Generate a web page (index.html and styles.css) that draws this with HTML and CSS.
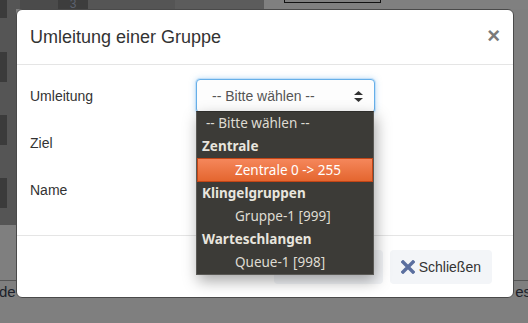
FILE: index.html
```html
<!DOCTYPE html>
<html lang="de">
<head>
  <meta charset="UTF-8">
  <title>Umleitung einer Gruppe</title>
  <link rel="stylesheet" href="styles.css">
</head>
<body>
  <div class="page">
    <div class="oben">
      <div class="seite">
        <div class="klotz k1"></div>
        <div class="klotz"></div>
        <div class="klotz"></div>
        <div class="klotz"></div>
      </div>
      <div class="rest">
        <div class="zelle z1"></div>
        <div class="zelle z2"></div>
        <div class="zelle z3">3</div>
        <div class="zelle z4"></div>
        <div class="zelle z5"></div>
        <div class="zelle z6"><span class="kasten"></span></div>
      </div>
    </div>
    <div class="mitte"></div>
    <div class="fusszeile">
      <span>de</span>
      <span>es</span>
    </div>
  </div>

  <div class="modal">
    <div class="modal-kopf">
      <h4>Umleitung einer Gruppe</h4>
      <span class="schliessen">&times;</span>
    </div>

    <div class="modal-inhalt">
      <div class="zeile">
        <label>Umleitung</label>
        <div class="auswahl">
          <span>-- Bitte wählen --</span>
          <svg width="9" height="11" viewBox="0 0 9 11"><path d="M4.5 0 L9 4 H0 Z M0 7 H9 L4.5 11 Z" fill="#333"/></svg>
        </div>
      </div>
      <div class="zeile"><label>Ziel</label></div>
      <div class="zeile"><label>Name</label></div>
    </div>

    <div class="modal-fuss">
      <button class="knopf verdeckt"></button>
      <button class="knopf">
        <svg width="14" height="14" viewBox="0 0 14 14"><path d="M2 2 L12 12 M12 2 L2 12" stroke="#5b6f9f" stroke-width="3.4" stroke-linecap="square"/></svg>
        Schließen
      </button>
    </div>

    <ul class="liste">
      <li class="opt erste">-- Bitte wählen --</li>
      <li class="gruppe">Zentrale</li>
      <li class="opt aktiv">Zentrale 0 -&gt; 255</li>
      <li class="gruppe">Klingelgruppen</li>
      <li class="opt">Gruppe-1 [999]</li>
      <li class="gruppe">Warteschlangen</li>
      <li class="opt">Queue-1 [998]</li>
    </ul>
  </div>
</body>
</html>
```

FILE: styles.css
```css
body {
  margin: 0;
  width: 528px;
  height: 323px;
  overflow: hidden;
  background-color: #7f7f7f;
  font-family: "Liberation Sans", Arial, sans-serif;
}
.page {
  display: flex;
  flex-direction: column;
}
.oben {
  display: flex;
}
.seite {
  width: 16px;
  height: 225px;
  background-color: #555;
  display: flex;
  flex-direction: column;
  gap: 33px;
}
.klotz {
  width: 7px;
  height: 30px;
  background-color: #3b3b3b;
}
.klotz.k1 {
  height: 18px;
  margin-bottom: 1px;
}
.rest {
  flex: 1;
  display: flex;
  height: 9px;
}
.zelle {
  height: 9px;
}
.z1 { width: 4px; background-color: #555; }
.z2 { width: 38px; background-color: #4b4b4b; }
.z3 { width: 30px; background-color: #3d3d3d; color: #5c6270; font-size: 12px; line-height: 9px; text-align: center; overflow: hidden; }
.z4 { width: 87px; background-color: #555; }
.z5 { width: 89px; background-color: #5c5c5c; }
.z6 { flex: 1; background-color: #808080; padding-left: 20px; }
.kasten {
  display: block;
  width: 95px;
  height: 2px;
  border: 1px solid #111;
  border-top: none;
}
.mitte {
  height: 55px;
}
.fusszeile {
  border-top: 1px solid #555;
  display: flex;
  justify-content: space-between;
  font-size: 15px;
  color: #1c1f2a;
  padding-top: 2px;
  margin-left: -1px;
  margin-right: -3px;
}

.modal {
  position: absolute;
  top: 9px;
  left: 16px;
  width: 496px;
  height: 287px;
  background-color: #fff;
  border: 1px solid #4a4a4a;
  border-radius: 6px;
  display: flex;
  flex-direction: column;
}
.modal-kopf {
  height: 54px;
  border-bottom: 1px solid #e5e5e5;
  display: flex;
  align-items: center;
  justify-content: space-between;
  padding: 0 14px 0 13px;
}
.modal-kopf h4 {
  margin: 0;
  font-size: 18px;
  font-weight: normal;
  color: #333;
}
.schliessen {
  font-size: 22px;
  font-weight: bold;
  color: #7a7a7a;
  margin-top: -2px;
  margin-right: -1px;
}
.modal-inhalt {
  height: 170px;
  padding: 14px 14px 0 13px;
  box-sizing: border-box;
  display: flex;
  flex-direction: column;
  gap: 13px;
}
.zeile {
  height: 34px;
  display: flex;
  align-items: center;
}
.zeile label {
  width: 166px;
  font-size: 14px;
  color: #333;
}
.auswahl {
  width: 179px;
  height: 34px;
  border: 1px solid #66afe9;
  border-radius: 4px;
  box-shadow: 0 0 0 1px #c4e0f8, 0 0 6px rgba(102, 175, 233, 0.5);
  display: flex;
  align-items: center;
  justify-content: space-between;
  padding: 0 11px 0 15px;
  box-sizing: border-box;
  font-size: 14px;
  color: #555;
  background-color: #fdfdfd;
}
.modal-fuss {
  border-top: 1px solid #e5e5e5;
  flex: 1;
  display: flex;
  justify-content: flex-end;
  align-items: center;
  gap: 7px;
  padding: 0 21px 0 0;
}
.knopf {
  height: 34px;
  border: none;
  border-radius: 4px;
  background-color: #f3f5f8;
  font-family: "Liberation Sans", Arial, sans-serif;
  font-size: 14px;
  color: #333;
  padding: 0 11px;
  display: flex;
  align-items: center;
  gap: 4px;
}
.knopf.verdeckt {
  width: 109px;
}

.liste {
  position: absolute;
  top: 101px;
  left: 179px;
  width: 176px;
  margin: 0;
  padding: 0;
  list-style: none;
  background-color: #3c3b37;
  border: 1px solid #5a5955;
  border-top-color: #2e2d2a;
  box-shadow: 2px 6px 14px rgba(0, 0, 0, 0.35);
  font-family: "Noto Sans", "Open Sans", sans-serif;
  font-size: 13.5px;
}
.liste li {
  height: 23px;
  line-height: 23px;
  color: #dfdbd2;
  white-space: nowrap;
}
.liste .gruppe {
  font-weight: bold;
  padding-left: 5px;
  color: #e8e5de;
}
.liste .opt {
  padding-left: 38px;
}
.liste .erste {
  padding-left: 9px;
}
.liste .aktiv {
  height: 22px;
  line-height: 22px;
  border: 1px solid #c24516;
  background: linear-gradient(#f5875b, #e4662f);
  color: #fff;
  padding-left: 37px;
}
```
